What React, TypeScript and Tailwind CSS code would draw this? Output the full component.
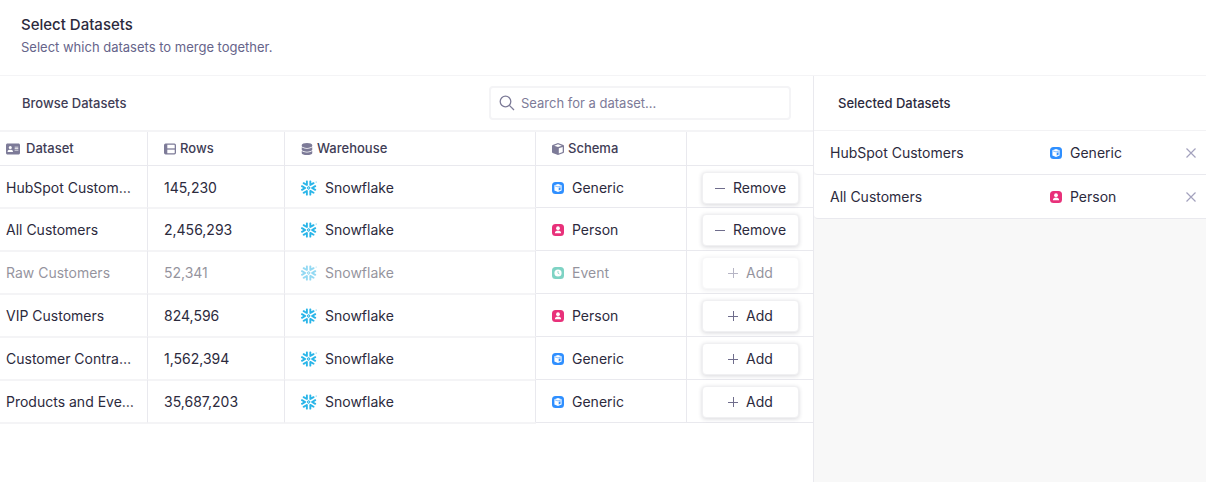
import type { ReactNode } from "react";
import { FaAddressCard, FaDatabase } from "react-icons/fa6";
import { SiSnowflake } from "react-icons/si";

type Schema = "Generic" | "Person" | "Event";
type Row = { name: string; rows: string; schema: Schema; state: "added" | "open" | "disabled" };

const rows: Row[] = [
  { name: "HubSpot Customers", rows: "145,230", schema: "Generic", state: "added" },
  { name: "All Customers", rows: "2,456,293", schema: "Person", state: "added" },
  { name: "Raw Customers", rows: "52,341", schema: "Event", state: "disabled" },
  { name: "VIP Customers", rows: "824,596", schema: "Person", state: "open" },
  { name: "Customer Contracts", rows: "1,562,394", schema: "Generic", state: "open" },
  { name: "Products and Events", rows: "35,687,203", schema: "Generic", state: "open" },
];

function CubeIcon({ className }: { className: string }) {
  return (
    <svg viewBox="0 0 12 12" className={className} aria-hidden="true">
      <path fill="currentColor" d="M6 0 11.4 1.9Q12 2.2 12 2.9V9Q12 9.7 11.4 10L6 12 .6 10Q0 9.7 0 9V2.9Q0 2.2.6 1.9Z" />
      <path fill="#fff" d="M6 1.3 9.8 2.7 6 4.1 2.2 2.7Z M6.8 5.3 10.7 3.9V9L6.8 10.4Z" />
    </svg>
  );
}

function RowsIcon() {
  return (
    <svg viewBox="0 0 12 12" className="size-3" aria-hidden="true">
      <rect x="0.65" y="1.15" width="10.7" height="9.7" rx="1" fill="none" stroke="currentColor" strokeWidth="1.3" />
      <path d="M1 1H3.3V11H1Z" fill="currentColor" />
      <path d="M3 6H11" stroke="currentColor" strokeWidth="1.3" />
    </svg>
  );
}

function SchemaIcon({ schema }: { schema: Schema }) {
  if (schema === "Generic") {
    return (
      <svg viewBox="0 0 12 12" className="size-3 shrink-0" aria-hidden="true">
        <rect width="12" height="12" rx="3.5" fill="#2f8fff" />
        <path d="M6 2.1 9.6 3.3V8.4L6 9.9 2.4 8.4V3.3Z" fill="#fff" />
        <path d="M3 3.9 6 4.9 9 3.9" fill="none" stroke="#2f8fff" strokeWidth="0.6" />
        <path d="M6.7 5.8 8.6 5.2V7.7L6.7 8.4Z" fill="#2f8fff" />
      </svg>
    );
  }
  if (schema === "Person") {
    return (
      <svg viewBox="0 0 12 12" className="size-3 shrink-0" aria-hidden="true">
        <rect width="12" height="12" rx="3.5" fill="#e8317a" />
        <circle cx="6" cy="4.2" r="1.9" fill="#fff" />
        <path d="M2.9 9.2C2.9 7.4 4.1 6.6 6 6.6S9.1 7.4 9.1 9.2Z" fill="#fff" />
      </svg>
    );
  }
  return (
    <svg viewBox="0 0 12 12" className="size-3 shrink-0" aria-hidden="true">
      <rect width="12" height="12" rx="3.5" fill="#00a88a" />
      <circle cx="6" cy="6" r="3.6" fill="#fff" />
      <path d="M6 4V6.2L7.4 6.9" fill="none" stroke="#00a88a" strokeWidth="0.8" />
    </svg>
  );
}

function HeadCell({ children, className }: { children?: ReactNode; className: string }) {
  return (
    <th scope="col" className={`h-[34px] border-b border-[#e9e9ee] text-left text-[13px] font-medium text-[#3f3d56] ${className}`}>
      <span className="flex items-center text-[#7d7b98]">{children}</span>
    </th>
  );
}

const divider = "border-r border-r-[#e9e9ee]";
const softLine = "border-b border-b-[#f4f4f6] shadow-[0_1px_0_#f4f4f6]";
const firmLine = "border-b border-b-[#e9e9ee]";

function DatasetRow({ row }: { row: Row }) {
  const added = row.state === "added";
  const disabled = row.state === "disabled";
  const fade = disabled ? "opacity-50" : "";
  return (
    <tr className="h-[43px] first:h-[42px]">
      <td className={`pt-0.5 pr-3 pl-1.5 ${divider} ${softLine}`}>
        <div className={`truncate ${fade}`}>{row.name}</div>
      </td>
      <td className={`pt-0.5 pl-4 ${divider} ${softLine}`}>
        <div className={fade}>{row.rows}</div>
      </td>
      <td className={`pt-0.5 pl-4 ${divider} ${softLine}`}>
        <div className={`flex items-center gap-2 ${fade}`}>
          <SiSnowflake className="size-4 text-[#29b5e8]" aria-hidden="true" />
          Snowflake
        </div>
      </td>
      <td className={`pt-0.5 pl-4 ${divider} ${firmLine}`}>
        <div className={`flex items-center gap-2 ${fade}`}>
          <SchemaIcon schema={row.schema} />
          {row.schema}
        </div>
      </td>
      <td className={`pt-0.5 pr-3.5 pl-[15px] ${firmLine}`}>
        <button
          type="button"
          disabled={disabled}
          className={`flex h-8 w-full items-center justify-center gap-2 rounded border border-[#f0f0f2] bg-white shadow-[0_1px_4px_rgba(40,38,60,0.18)] ${fade}`}
        >
          <svg viewBox="0 0 10 10" className="size-2.5" fill="none" stroke="#6f6d8c" aria-hidden="true">
            <path d={added ? "M0 5.5H10" : "M0 5.5H10M5.5 0V10"} />
          </svg>
          {added ? "Remove" : "Add"}
        </button>
      </td>
    </tr>
  );
}

function SelectedItem({ name, schema }: { name: string; schema: Schema }) {
  return (
    <li className="flex h-11 items-center rounded-bl border-b border-[#e9e9ee] bg-white pr-2.5 pl-4">
      <span className="flex-1 truncate">{name}</span>
      <span className="flex w-[136px] items-center gap-2">
        <SchemaIcon schema={schema} />
        {schema}
      </span>
      <button type="button" aria-label={`Remove ${name}`} className="flex size-2.5 items-center justify-center">
        <svg viewBox="0 0 10 10" className="size-2.5" fill="none" stroke="#a3a1bd" strokeWidth="1.2" aria-hidden="true">
          <path d="M0.5 0.5 9.5 9.5M9.5 0.5 0.5 9.5" />
        </svg>
      </button>
    </li>
  );
}

export default function App() {
  return (
    <div className="flex min-h-screen flex-col bg-white font-['Inter','Liberation_Sans',sans-serif] text-sm text-[#2c2a3d]">
      <header className="border-b border-[#f4f4f6] pt-[15px] pb-[18px] pl-[21px]">
        <h1 className="text-[15px] leading-5 font-medium">Select Datasets</h1>
        <p className="mt-0.5 text-[13px] leading-5 text-[#66648a]">Select which datasets to merge together.</p>
      </header>
      <main className="flex flex-1">
        <section className="min-w-0 flex-1 border-r border-[#e9e9ee]">
          <div className="flex h-14 items-center justify-between border-b-2 border-[#f4f4f6] px-[22px]">
            <h2 className="text-[13px] font-medium text-[#3f3d56]">Browse Datasets</h2>
            <label className="flex h-[34px] w-[302px] items-center gap-1.5 rounded border-2 border-[#f4f4f6] px-2">
              <svg viewBox="0 0 16 16" className="size-4 shrink-0" fill="none" stroke="#7d7b98" strokeWidth="1.3" aria-hidden="true">
                <circle cx="6.5" cy="6.5" r="5.3" />
                <path d="M10.4 10.4 15 15" />
              </svg>
              <input
                type="text"
                aria-label="Search for a dataset"
                placeholder="Search for a dataset..."
                className="min-w-0 flex-1 text-[13px] outline-none placeholder:text-[#7d7b98]"
              />
            </label>
          </div>
          <table className="w-full table-fixed border-separate border-spacing-0">
            <colgroup>
              <col className="w-[148px]" />
              <col className="w-[137px]" />
              <col />
              <col className="w-[151px]" />
              <col className="w-[126px]" />
            </colgroup>
            <thead>
              <tr>
                <HeadCell className="border-r pl-1.5">
                  <FaAddressCard className="mr-1.5 size-3.5" aria-hidden="true" />
                  <span className="text-[#3f3d56]">Dataset</span>
                </HeadCell>
                <HeadCell className="border-r pl-4">
                  <RowsIcon />
                  <span className="ml-1 text-[#3f3d56]">Rows</span>
                </HeadCell>
                <HeadCell className="border-r pl-4">
                  <FaDatabase className="size-3" aria-hidden="true" />
                  <span className="ml-1 text-[#3f3d56]">Warehouse</span>
                </HeadCell>
                <HeadCell className="border-r pl-4">
                  <CubeIcon className="size-3" />
                  <span className="ml-1 text-[#3f3d56]">Schema</span>
                </HeadCell>
                <HeadCell className="pl-4" />
              </tr>
            </thead>
            <tbody>
              {rows.map((row) => (
                <DatasetRow key={row.name} row={row} />
              ))}
            </tbody>
          </table>
        </section>
        <aside className="w-[392px] shrink-0 bg-[#f8f8f8]">
          <h2 className="flex h-[55px] items-center border-b border-[#f2f2f4] bg-white pl-6 text-[13px] font-medium">
            Selected Datasets
          </h2>
          <ul>
            <SelectedItem name="HubSpot Customers" schema="Generic" />
            <SelectedItem name="All Customers" schema="Person" />
          </ul>
        </aside>
      </main>
    </div>
  );
}
